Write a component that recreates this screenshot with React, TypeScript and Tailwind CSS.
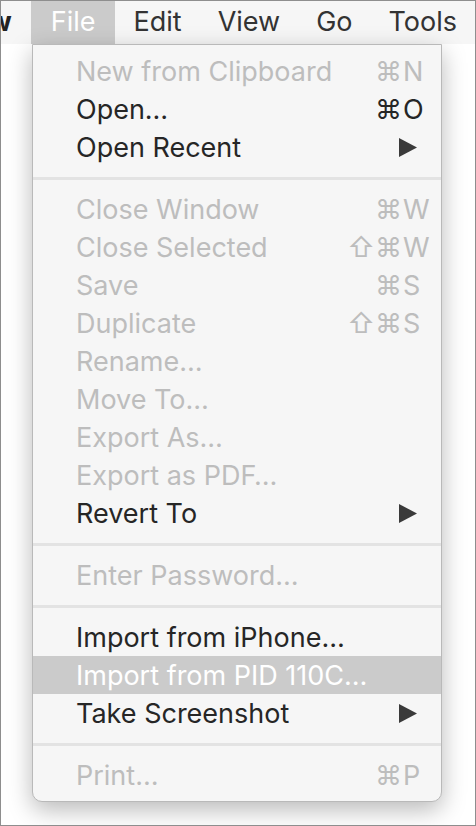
import React from "react";

type Item =
  | { type: "sep" }
  | {
      type: "item";
      label: string;
      disabled?: boolean;
      highlighted?: boolean;
      mods?: string;
      keyChar?: string;
      submenu?: boolean;
    };

const items: Item[] = [
  { type: "item", label: "New from Clipboard", disabled: true, mods: "⌘", keyChar: "N" },
  { type: "item", label: "Open…", mods: "⌘", keyChar: "O" },
  { type: "item", label: "Open Recent", submenu: true },
  { type: "sep" },
  { type: "item", label: "Close Window", disabled: true, mods: "⌘", keyChar: "W" },
  { type: "item", label: "Close Selected", disabled: true, mods: "⇧⌘", keyChar: "W" },
  { type: "item", label: "Save", disabled: true, mods: "⌘", keyChar: "S" },
  { type: "item", label: "Duplicate", disabled: true, mods: "⇧⌘", keyChar: "S" },
  { type: "item", label: "Rename…", disabled: true },
  { type: "item", label: "Move To…", disabled: true },
  { type: "item", label: "Export As…", disabled: true },
  { type: "item", label: "Export as PDF…", disabled: true },
  { type: "item", label: "Revert To", submenu: true },
  { type: "sep" },
  { type: "item", label: "Enter Password…", disabled: true },
  { type: "sep" },
  { type: "item", label: "Import from iPhone…" },
  { type: "item", label: "Import from PID 110C…", highlighted: true },
  { type: "item", label: "Take Screenshot", submenu: true },
  { type: "sep" },
  { type: "item", label: "Print…", disabled: true, mods: "⌘", keyChar: "P" },
];

function Arrow() {
  return (
    <svg width="18" height="19" viewBox="0 0 18 19" className="block">
      <polygon points="0,0 18,9.5 0,19" fill="#3a3a3a" />
    </svg>
  );
}

export default function App() {
  return (
    <div
      className="relative w-[476px] h-[826px] border border-[#8e8e8e] bg-white overflow-hidden"
      style={{ fontFamily: "Inter, 'Noto Sans', sans-serif" }}
    >
      {/* Menu bar */}
      <div className="h-[43px] bg-[#f6f6f6] flex items-stretch text-[27px] text-[#333333] overflow-hidden">
        <div className="w-[31px] flex items-center justify-end overflow-hidden pr-[19px] font-bold text-[#222]">
          <span className="whitespace-nowrap">w</span>
        </div>
        <div className="flex items-center bg-[#cbcbcb] text-white px-[20px]">File</div>
        <div className="flex items-center px-[18px]">Edit</div>
        <div className="flex items-center px-[18px]">View</div>
        <div className="flex items-center px-[18px]">Go</div>
        <div className="flex items-center px-[18px]">Tools</div>
      </div>

      {/* Dropdown menu */}
      <div className="absolute left-[31px] top-[43px] w-[410px] bg-[#f6f6f6] border border-[#b9b9b9] rounded-b-[10px] py-[7px] shadow-[0_8px_24px_rgba(0,0,0,0.28)] text-[27px]">
        {items.map((it, i) => {
          if (it.type === "sep") {
            return (
              <div key={i} className="h-[24px] flex items-center">
                <div className="h-[3px] w-full bg-[#e3e3e3]" />
              </div>
            );
          }
          const color = it.highlighted
            ? "text-white"
            : it.disabled
            ? "text-[#bdbdbd]"
            : "text-[#262626]";
          return (
            <div
              key={i}
              className={`h-[38px] flex items-center pl-[43px] ${
                it.submenu ? "pr-[24px]" : "pr-[15px]"
              } ${it.highlighted ? "bg-[#cbcbcb]" : ""} ${color}`}
            >
              <span className="flex-1 whitespace-nowrap leading-none">{it.label}</span>
              {it.keyChar && (
                <span className="flex items-center leading-none">
                  <span className="text-right">{it.mods}</span>
                  <span className="w-[24px] pl-[1px]">{it.keyChar}</span>
                </span>
              )}
              {it.submenu && <Arrow />}
            </div>
          );
        })}
      </div>
    </div>
  );
}
